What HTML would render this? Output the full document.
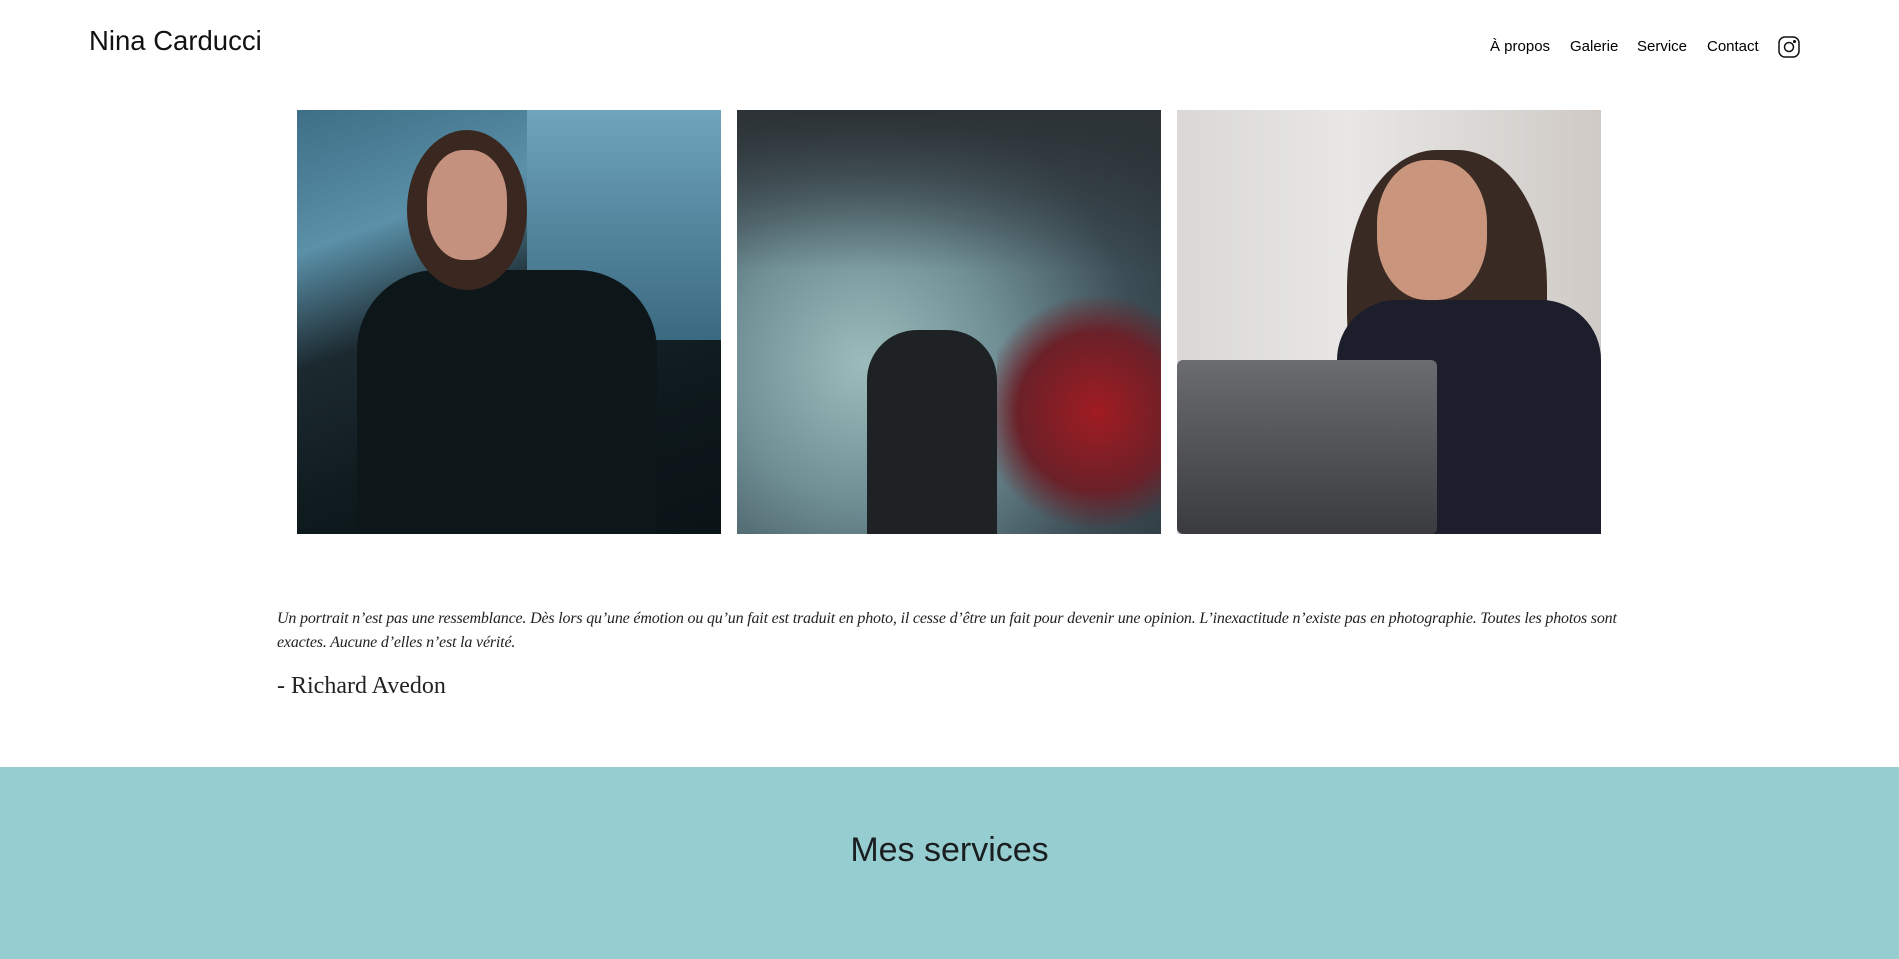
<!DOCTYPE html>
<html><head><meta charset="utf-8"><style>
*{margin:0;padding:0;box-sizing:border-box}
body{width:1899px;height:959px;overflow:hidden;background:#fff;font-family:"Liberation Sans",sans-serif;color:#111;position:relative}
.title{position:absolute;left:89px;top:25px;font-size:27.5px;font-weight:400;color:#111}
.nav{position:absolute;top:38px;font-size:15px;color:#000}
.img{position:absolute;top:110px;width:424px;height:424px;overflow:hidden}
.q{position:absolute;left:277px;top:607px;font-family:"Liberation Serif",serif;font-style:italic;font-size:16px;line-height:24px;color:#222;white-space:nowrap;letter-spacing:-0.18px}
.a{position:absolute;left:277px;top:673px;font-family:"Liberation Serif",serif;font-size:24px;color:#222}
.band{position:absolute;left:0;top:767px;width:1899px;height:192px;background:#96cdd0}
.band h2{position:absolute;left:0;width:100%;top:64px;text-align:center;font-weight:400;font-size:34px;color:#1a1e20}
</style></head><body>
<div class="title">Nina Carducci</div>
<div class="nav" style="left:1490px">À propos</div>
<div class="nav" style="left:1570px">Galerie</div>
<div class="nav" style="left:1637px">Service</div>
<div class="nav" style="left:1707px">Contact</div>
<svg style="position:absolute;left:1778px;top:36px" width="22" height="22" viewBox="0 0 22 22" fill="none" stroke="#111" stroke-width="1.5"><rect x="1" y="1" width="20" height="20" rx="6"/><circle cx="11" cy="11" r="4.5"/><circle cx="16.5" cy="5.5" r="0.8" fill="#111"/></svg>

<div class="img" style="left:297px;background:linear-gradient(160deg,#3e6f86 0%,#5a90a8 25%,#1c2a30 45%,#0f1a1e 70%,#0a1316 100%)">
 <div style="position:absolute;left:230px;top:0;width:194px;height:230px;background:linear-gradient(180deg,#6fa4bd,#3a6a80)"></div>
 <div style="position:absolute;left:60px;top:160px;width:300px;height:264px;background:#0d1719;border-radius:80px 80px 0 0"></div>
 <div style="position:absolute;left:110px;top:20px;width:120px;height:160px;background:#3a2720;border-radius:50%"></div>
 <div style="position:absolute;left:130px;top:40px;width:80px;height:110px;background:#c4917e;border-radius:45%"></div>
</div>
<div class="img" style="left:737px;background:radial-gradient(circle at 30% 60%,#9cbcbc 0%,#6f8f95 35%,#3c4d55 70%,#2a363c 100%)">
 <div style="position:absolute;left:260px;top:180px;width:200px;height:244px;background:radial-gradient(circle,#a01c22 0%,#6b2028 50%,transparent 75%)"></div>
 <div style="position:absolute;left:0;top:0;width:424px;height:160px;background:linear-gradient(180deg,#2c3236,transparent)"></div>
 <div style="position:absolute;left:130px;top:220px;width:130px;height:204px;background:#1e2224;border-radius:50px 50px 0 0"></div>
</div>
<div class="img" style="left:1177px;background:linear-gradient(90deg,#d9d8d6 0%,#e8e7e5 40%,#cfcac6 100%)">
 <div style="position:absolute;left:170px;top:40px;width:200px;height:300px;background:#3a2a24;border-radius:45%"></div>
 <div style="position:absolute;left:200px;top:50px;width:110px;height:140px;background:#c9957c;border-radius:45%"></div>
 <div style="position:absolute;left:160px;top:190px;width:264px;height:234px;background:#1c1e2c;border-radius:60px 60px 0 0"></div>
 <div style="position:absolute;left:0;top:250px;width:260px;height:174px;background:linear-gradient(180deg,#6b6c70,#3a3b3f);border-radius:6px"></div>
</div>

<div class="q">Un portrait n’est pas une ressemblance. Dès lors qu’une émotion ou qu’un fait est traduit en photo, il cesse d’être un fait pour devenir une opinion. L’inexactitude n’existe pas en photographie. Toutes les photos sont<br>exactes. Aucune d’elles n’est la vérité.</div>
<div class="a">- Richard Avedon</div>
<div class="band"><h2>Mes services</h2></div>
</body></html>
